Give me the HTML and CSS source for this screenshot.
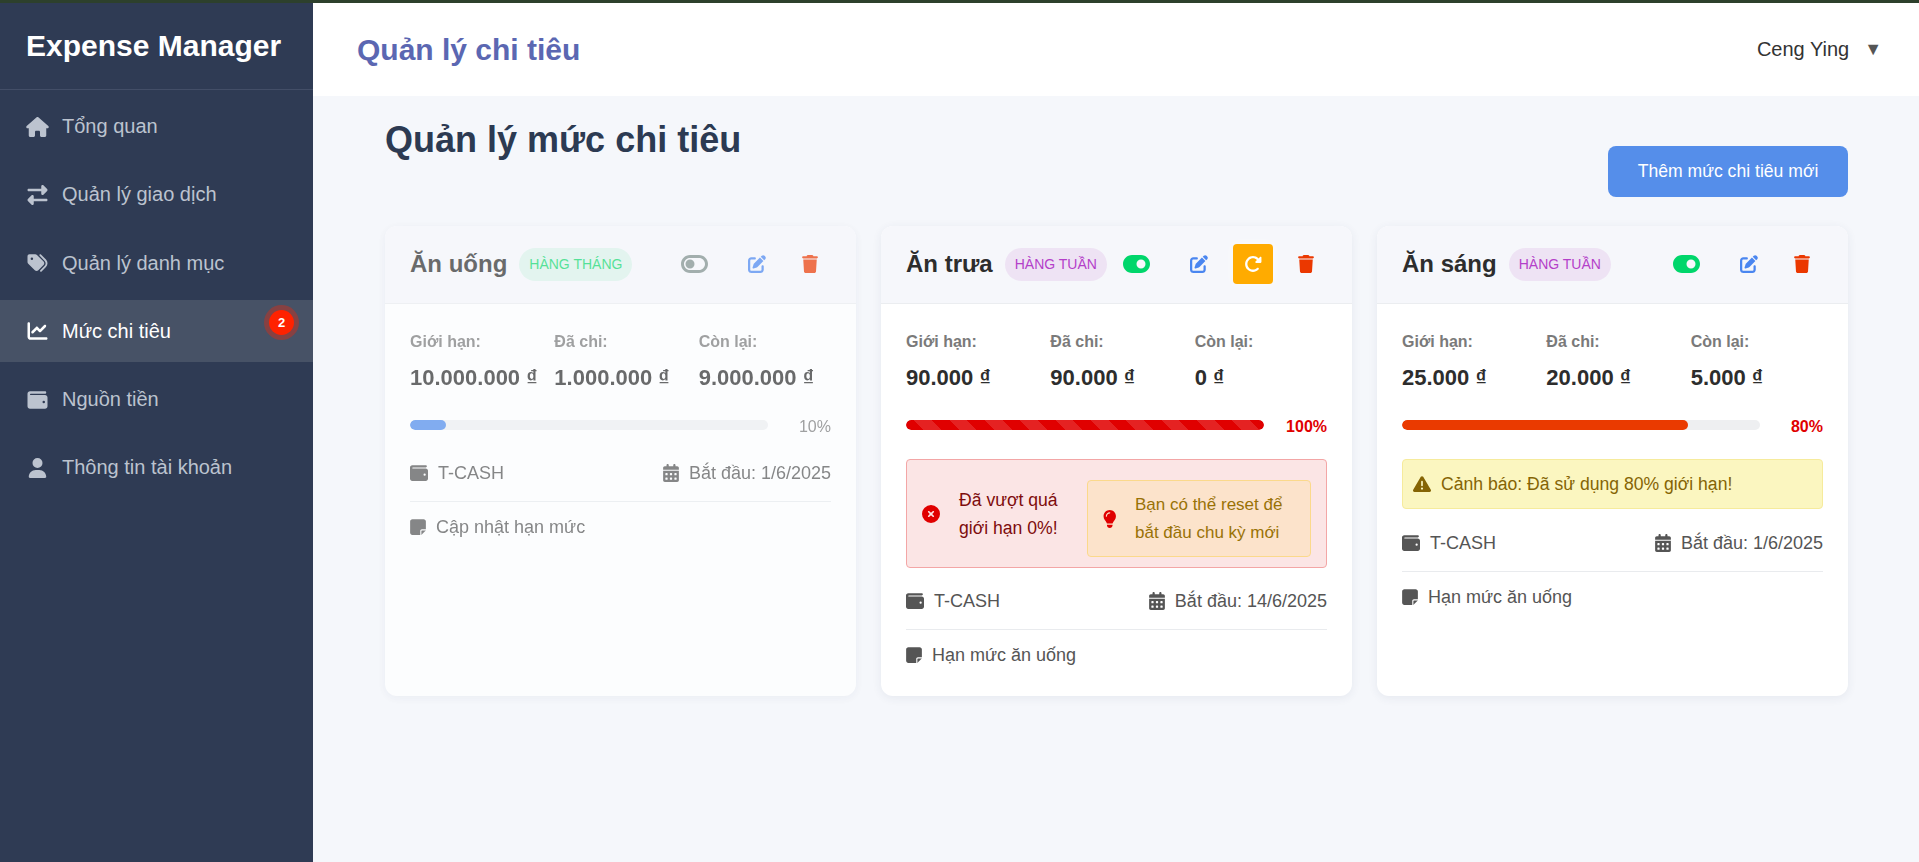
FILE: index.html
```html
<!DOCTYPE html>
<html lang="vi">
  <head>
    <meta charset="UTF-8" />
    <meta name="viewport" content="width=device-width, initial-scale=1.0" />
    <title>Expense Manager</title>
    <link rel="stylesheet" href="styles.css">
  </head>
  <body>
    <svg class="sprite" xmlns="http://www.w3.org/2000/svg">
      <symbol id="i-home" viewBox="0 0 576 512"><path d="M575.8 255.5c0 18-15 32.1-32 32.1h-32l.7 160.2c0 2.7-.2 5.4-.5 8.1V472c0 22.1-17.9 40-40 40H456c-1.1 0-2.2 0-3.3-.1c-1.4 .1-2.8 .1-4.2 .1H416 392c-22.1 0-40-17.9-40-40V448 384c0-17.7-14.3-32-32-32H256c-17.7 0-32 14.3-32 32v64 24c0 22.1-17.9 40-40 40H160 128.1c-1.5 0-3-.1-4.5-.2c-1.2 .1-2.4 .2-3.6 .2H104c-22.1 0-40-17.9-40-40V360c0-.9 0-1.9 .1-2.8V287.6H32c-18 0-32-14-32-32.1c0-9 3-17 10-24L266.4 8c7-7 15-8 22-8s15 2 21 7L564.8 231.5c8 7 12 15 11 24z"/></symbol>
      <symbol id="i-exchange" viewBox="0 0 512 512"><path d="M32 96l320 0V32c0-12.9 7.8-24.6 19.8-29.6s25.7-2.2 34.9 6.9l96 96c6 6 9.4 14.1 9.4 22.6s-3.4 16.6-9.4 22.6l-96 96c-9.2 9.2-22.9 11.9-34.9 6.9s-19.8-16.6-19.8-29.6V160L32 160c-17.7 0-32-14.3-32-32s14.3-32 32-32zM480 352c17.7 0 32 14.3 32 32s-14.3 32-32 32H160v64c0 12.9-7.8 24.6-19.8 29.6s-25.7 2.2-34.9-6.9l-96-96c-6-6-9.4-14.1-9.4-22.6s3.4-16.6 9.4-22.6l96-96c9.2-9.2 22.9-11.9 34.9-6.9s19.8 16.6 19.8 29.6l0 64H480z"/></symbol>
      <symbol id="i-tags" viewBox="0 0 512 512"><path d="M345 39.1L472.8 168.4c52.4 53 52.4 138.2 0 191.2L360.8 472.9c-9.3 9.4-24.5 9.5-33.9 .2s-9.5-24.5-.2-33.9L438.6 325.9c33.9-34.3 33.9-89.4 0-123.7L310.9 72.9c-9.3-9.4-9.2-24.6 .2-33.9s24.6-9.2 33.9 .2zM0 229.5V80C0 53.5 21.5 32 48 32H197.5c17 0 33.3 6.7 45.3 18.7l168 168c25 25 25 65.5 0 90.5L277.3 442.7c-25 25-65.5 25-90.5 0l-168-168C6.7 262.7 0 246.5 0 229.5zM144 144a32 32 0 1 0 -64 0 32 32 0 1 0 64 0z"/></symbol>
      <symbol id="i-chart" viewBox="0 0 512 512"><path d="M64 64c0-17.7-14.3-32-32-32S0 46.3 0 64V400c0 44.2 35.8 80 80 80H480c17.7 0 32-14.3 32-32s-14.3-32-32-32H80c-8.8 0-16-7.2-16-16V64zm406.6 86.6c12.5-12.5 12.5-32.8 0-45.3s-32.8-12.5-45.3 0L320 210.7l-57.4-57.4c-12.5-12.5-32.8-12.5-45.3 0l-112 112c-12.5 12.5-12.5 32.8 0 45.3s32.8 12.5 45.3 0L240 221.3l57.4 57.4c12.5 12.5 32.8 12.5 45.3 0l128-128z"/></symbol>
      <symbol id="i-wallet" viewBox="0 0 512 512"><path d="M64 32C28.7 32 0 60.7 0 96V416c0 35.3 28.7 64 64 64H448c35.3 0 64-28.7 64-64V192c0-35.3-28.7-64-64-64H80c-8.8 0-16-7.2-16-16s7.2-16 16-16H448c17.7 0 32-14.3 32-32s-14.3-32-32-32H64zM416 272a32 32 0 1 1 0 64 32 32 0 1 1 0-64z"/></symbol>
      <symbol id="i-user" viewBox="0 0 448 512"><path d="M224 256A128 128 0 1 0 224 0a128 128 0 1 0 0 256zm-45.7 48C79.8 304 0 383.8 0 482.3C0 498.7 13.3 512 29.7 512H418.3c16.4 0 29.7-13.3 29.7-29.7C448 383.8 368.2 304 269.7 304H178.3z"/></symbol>
      <symbol id="i-toggle-on" viewBox="0 0 576 512"><path d="M192 64C86 64 0 150 0 256S86 448 192 448H384c106 0 192-86 192-192s-86-192-192-192H192zm192 96a96 96 0 1 1 0 192 96 96 0 1 1 0-192z"/></symbol>
      <symbol id="i-toggle-off" viewBox="0 0 576 512"><path d="M384 128c70.7 0 128 57.3 128 128s-57.3 128-128 128H192c-70.7 0-128-57.3-128-128s57.3-128 128-128H384zM576 256c0-106-86-192-192-192H192C86 64 0 150 0 256S86 448 192 448H384c106 0 192-86 192-192zM192 352a96 96 0 1 0 0-192 96 96 0 1 0 0 192z"/></symbol>
      <symbol id="i-edit" viewBox="0 0 512 512"><path d="M471.6 21.7c-21.9-21.9-57.3-21.9-79.2 0L362.3 51.7l97.9 97.9 30.1-30.1c21.9-21.9 21.9-57.3 0-79.2L471.6 21.7zm-299.2 220c-6.1 6.1-10.8 13.6-13.5 21.9l-29.6 88.8c-2.9 8.6-.6 18.1 5.8 24.6s15.9 8.7 24.6 5.8l88.8-29.6c8.2-2.7 15.7-7.4 21.9-13.5L437.7 172.3 339.7 74.3 172.4 241.7zM96 64C43 64 0 107 0 160V416c0 53 43 96 96 96H352c53 0 96-43 96-96V320c0-17.7-14.3-32-32-32s-32 14.3-32 32v96c0 17.7-14.3 32-32 32H96c-17.7 0-32-14.3-32-32V160c0-17.7 14.3-32 32-32h96c17.7 0 32-14.3 32-32s-14.3-32-32-32H96z"/></symbol>
      <symbol id="i-trash" viewBox="0 0 448 512"><path d="M135.2 17.7L128 32H32C14.3 32 0 46.3 0 64S14.3 96 32 96H416c17.7 0 32-14.3 32-32s-14.3-32-32-32H320l-7.2-14.3C307.4 6.8 296.3 0 284.2 0H163.8c-12.1 0-23.2 6.8-28.6 17.7zM416 128H32L53.2 467c1.6 25.3 22.6 45 47.9 45H346.9c25.3 0 46.3-19.7 47.9-45L416 128z"/></symbol>
      <symbol id="i-redo" viewBox="0 0 512 512"><path d="M463.5 224H472c13.3 0 24-10.7 24-24V72c0-9.7-5.8-18.5-14.8-22.2s-19.3-1.7-26.2 5.2L413.4 96.6c-87.6-86.5-228.7-86.2-315.8 1c-87.5 87.5-87.5 229.3 0 316.8s229.3 87.5 316.8 0c12.5-12.5 12.5-32.8 0-45.3s-32.8-12.5-45.3 0c-62.5 62.5-163.8 62.5-226.3 0s-62.5-163.8 0-226.3c62.2-62.2 162.7-62.5 225.3-1L327 183c-6.9 6.9-8.9 17.2-5.2 26.2s12.5 14.8 22.2 14.8H463.5z"/></symbol>
      <symbol id="i-calendar" viewBox="0 0 448 512"><path d="M128 0c17.7 0 32 14.3 32 32V64H288V32c0-17.7 14.3-32 32-32s32 14.3 32 32V64h48c26.5 0 48 21.5 48 48v48H0V112C0 85.5 21.5 64 48 64H96V32c0-17.7 14.3-32 32-32zM0 192H448V464c0 26.5-21.5 48-48 48H48c-26.5 0-48-21.5-48-48V192zm64 80v32c0 8.8 7.2 16 16 16h32c8.8 0 16-7.2 16-16V272c0-8.8-7.2-16-16-16H80c-8.8 0-16 7.2-16 16zm128 0v32c0 8.8 7.2 16 16 16h32c8.8 0 16-7.2 16-16V272c0-8.8-7.2-16-16-16H208c-8.8 0-16 7.2-16 16zm144-16c-8.8 0-16 7.2-16 16v32c0 8.8 7.2 16 16 16h32c8.8 0 16-7.2 16-16V272c0-8.8-7.2-16-16-16H336zM64 400v32c0 8.8 7.2 16 16 16h32c8.8 0 16-7.2 16-16V400c0-8.8-7.2-16-16-16H80c-8.8 0-16 7.2-16 16zm144-16c-8.8 0-16 7.2-16 16v32c0 8.8 7.2 16 16 16h32c8.8 0 16-7.2 16-16V400c0-8.8-7.2-16-16-16H208zm112 16v32c0 8.8 7.2 16 16 16h32c8.8 0 16-7.2 16-16V400c0-8.8-7.2-16-16-16H336c-8.8 0-16 7.2-16 16z"/></symbol>
      <symbol id="i-note" viewBox="0 0 448 512"><path d="M64 32C28.7 32 0 60.7 0 96V416c0 35.3 28.7 64 64 64H288V368c0-26.5 21.5-48 48-48H448V96c0-35.3-28.7-64-64-64H64zM448 352H402.7 336c-8.8 0-16 7.2-16 16v66.7V480l32-32 64-64 32-32z"/></symbol>
      <symbol id="i-error" viewBox="0 0 512 512"><path d="M256 512A256 256 0 1 0 256 0a256 256 0 1 0 0 512zM175 175c9.4-9.4 24.6-9.4 33.9 0l47 47 47-47c9.4-9.4 24.6-9.4 33.9 0s9.4 24.6 0 33.9l-47 47 47 47c9.4 9.4 9.4 24.6 0 33.9s-24.6 9.4-33.9 0l-47-47-47 47c-9.4 9.4-24.6 9.4-33.9 0s-9.4-24.6 0-33.9l47-47-47-47c-9.4-9.4-9.4-24.6 0-33.9z"/></symbol>
      <symbol id="i-bulb" viewBox="0 0 384 512"><path d="M272 384c9.6-31.9 29.5-59.1 49.2-86.2l0 0c5.2-7.1 10.4-14.2 15.4-21.4c19.8-28.5 31.4-63 31.4-100.3C368 78.8 289.2 0 192 0S16 78.8 16 176c0 37.3 11.6 71.9 31.4 100.3c5 7.2 10.2 14.3 15.4 21.4l0 0c19.8 27.1 39.7 54.4 49.2 86.2H272zM192 512c44.2 0 80-35.8 80-80V416H112v16c0 44.2 35.8 80 80 80zM112 176c0 8.8-7.2 16-16 16s-16-7.2-16-16c0-61.9 50.1-112 112-112c8.8 0 16 7.2 16 16s-7.2 16-16 16c-44.2 0-80 35.8-80 80z"/></symbol>
      <symbol id="i-warning" viewBox="0 0 512 512"><path d="M256 32c14.2 0 27.3 7.5 34.5 19.8l216 368c7.3 12.4 7.3 27.7 .2 40.1S486.3 480 472 480H40c-14.3 0-27.6-7.7-34.7-20.1s-7-27.8 .2-40.1l216-368C228.7 39.5 241.8 32 256 32zm0 128c-13.3 0-24 10.7-24 24V296c0 13.3 10.7 24 24 24s24-10.7 24-24V184c0-13.3-10.7-24-24-24zm32 224a32 32 0 1 0 -64 0 32 32 0 1 0 64 0z"/></symbol>
    </svg>

    <div class="top-line"></div>
    <div class="layout">
      <aside class="sidebar">
        <div class="logo">Expense Manager</div>
        <nav class="nav">
          <a class="nav-item"><svg class="nav-icon"><use href="#i-home"/></svg>Tổng quan</a>
          <a class="nav-item"><svg class="nav-icon"><use href="#i-exchange"/></svg>Quản lý giao dịch</a>
          <a class="nav-item"><svg class="nav-icon"><use href="#i-tags"/></svg>Quản lý danh mục</a>
          <a class="nav-item active"><svg class="nav-icon"><use href="#i-chart"/></svg>Mức chi tiêu<span class="nav-badge">2</span></a>
          <a class="nav-item"><svg class="nav-icon"><use href="#i-wallet"/></svg>Nguồn tiền</a>
          <a class="nav-item"><svg class="nav-icon"><use href="#i-user"/></svg>Thông tin tài khoản</a>
        </nav>
      </aside>

      <div class="main">
        <header class="topbar">
          <h2 class="topbar-title">Quản lý chi tiêu</h2>
          <div class="user-menu"><span>Ceng Ying</span><span class="user-arrow">▼</span></div>
        </header>

        <div class="page">
          <div class="page-head">
            <h1 class="page-title">Quản lý mức chi tiêu</h1>
            <button class="add-btn">Thêm mức chi tiêu mới</button>
          </div>

          <div class="cards">
            <div class="card disabled">
              <div class="card-head">
                <span class="card-title">Ăn uống</span>
                <span class="chip monthly">HÀNG THÁNG</span>
                <div class="actions">
                  <span class="act act-toggle off"><svg><use href="#i-toggle-off"/></svg></span>
                  <span class="act act-edit"><svg><use href="#i-edit"/></svg></span>
                  <span class="act act-trash"><svg><use href="#i-trash"/></svg></span>
                </div>
              </div>
              <div class="card-body">
                <div class="stats">
                  <div><div class="stat-label">Giới hạn:</div><div class="stat-value">10.000.000 ₫</div></div>
                  <div><div class="stat-label">Đã chi:</div><div class="stat-value">1.000.000 ₫</div></div>
                  <div><div class="stat-label">Còn lại:</div><div class="stat-value">9.000.000 ₫</div></div>
                </div>
                <div class="progress">
                  <div class="bar"><div class="bar-fill fill-ok" style="width: 10%"></div></div>
                  <span class="percent">10%</span>
                </div>
                <div class="meta">
                  <span class="meta-item"><svg class="meta-icon wide"><use href="#i-wallet"/></svg>T-CASH</span>
                  <span class="meta-item"><svg class="meta-icon"><use href="#i-calendar"/></svg>Bắt đầu: 1/6/2025</span>
                </div>
                <div class="note"><svg class="meta-icon"><use href="#i-note"/></svg>Cập nhật hạn mức</div>
              </div>
            </div>

            <div class="card">
              <div class="card-head">
                <span class="card-title">Ăn trưa</span>
                <span class="chip weekly">HÀNG TUẦN</span>
                <div class="actions">
                  <span class="act act-toggle"><svg><use href="#i-toggle-on"/></svg></span>
                  <span class="act act-edit"><svg><use href="#i-edit"/></svg></span>
                  <span class="act act-reset"><svg><use href="#i-redo"/></svg></span>
                  <span class="act act-trash"><svg><use href="#i-trash"/></svg></span>
                </div>
              </div>
              <div class="card-body">
                <div class="stats">
                  <div><div class="stat-label">Giới hạn:</div><div class="stat-value">90.000 ₫</div></div>
                  <div><div class="stat-label">Đã chi:</div><div class="stat-value">90.000 ₫</div></div>
                  <div><div class="stat-label">Còn lại:</div><div class="stat-value">0 ₫</div></div>
                </div>
                <div class="progress">
                  <div class="bar"><div class="bar-fill fill-over" style="width: 100%"></div></div>
                  <span class="percent danger">100%</span>
                </div>
                <div class="alert alert-danger">
                  <svg class="alert-icon"><use href="#i-error"/></svg>
                  <span class="alert-text">Đã vượt quá giới hạn 0%!</span>
                  <div class="hint">
                    <svg class="hint-icon"><use href="#i-bulb"/></svg>
                    <span>Bạn có thể reset để bắt đầu chu kỳ mới</span>
                  </div>
                </div>
                <div class="meta">
                  <span class="meta-item"><svg class="meta-icon wide"><use href="#i-wallet"/></svg>T-CASH</span>
                  <span class="meta-item"><svg class="meta-icon"><use href="#i-calendar"/></svg>Bắt đầu: 14/6/2025</span>
                </div>
                <div class="note"><svg class="meta-icon"><use href="#i-note"/></svg>Hạn mức ăn uống</div>
              </div>
            </div>

            <div class="card">
              <div class="card-head">
                <span class="card-title">Ăn sáng</span>
                <span class="chip weekly">HÀNG TUẦN</span>
                <div class="actions">
                  <span class="act act-toggle"><svg><use href="#i-toggle-on"/></svg></span>
                  <span class="act act-edit"><svg><use href="#i-edit"/></svg></span>
                  <span class="act act-trash"><svg><use href="#i-trash"/></svg></span>
                </div>
              </div>
              <div class="card-body">
                <div class="stats">
                  <div><div class="stat-label">Giới hạn:</div><div class="stat-value">25.000 ₫</div></div>
                  <div><div class="stat-label">Đã chi:</div><div class="stat-value">20.000 ₫</div></div>
                  <div><div class="stat-label">Còn lại:</div><div class="stat-value">5.000 ₫</div></div>
                </div>
                <div class="progress">
                  <div class="bar"><div class="bar-fill fill-warn" style="width: 80%"></div></div>
                  <span class="percent danger">80%</span>
                </div>
                <div class="alert alert-warning">
                  <svg class="warn-icon"><use href="#i-warning"/></svg>
                  <span>Cảnh báo: Đã sử dụng 80% giới hạn!</span>
                </div>
                <div class="meta">
                  <span class="meta-item"><svg class="meta-icon wide"><use href="#i-wallet"/></svg>T-CASH</span>
                  <span class="meta-item"><svg class="meta-icon"><use href="#i-calendar"/></svg>Bắt đầu: 1/6/2025</span>
                </div>
                <div class="note"><svg class="meta-icon"><use href="#i-note"/></svg>Hạn mức ăn uống</div>
              </div>
            </div>
          </div>
        </div>
      </div>
    </div>
  </body>
</html>
```

FILE: styles.css
```css
* {
  box-sizing: border-box;
}

body {
  margin: 0;
  font-family: "Liberation Sans", Arial, sans-serif;
  background-color: #f5f7fb;
  color: #2d2d2d;
  overflow: hidden;
}

svg {
  fill: currentColor;
  display: block;
  flex-shrink: 0;
}

.sprite {
  display: none;
}

.top-line {
  height: 3px;
  background-color: #2d402c;
}

.layout {
  display: flex;
  height: 859px;
}

/* sidebar */
.sidebar {
  width: 313px;
  flex-shrink: 0;
  background-color: #2f3b54;
}

.logo {
  height: 87px;
  padding: 26px 0 0 26px;
  font-size: 30px;
  line-height: 34px;
  font-weight: 700;
  color: #fff;
  border-bottom: 1px solid #434e67;
}

.nav {
  display: flex;
  flex-direction: column;
  gap: 6.3px;
  padding-top: 5.5px;
}

.nav-item {
  position: relative;
  display: flex;
  align-items: center;
  height: 62px;
  padding-left: 26px;
  font-size: 20px;
  color: #bcc3cf;
}

.nav-item.active {
  background-color: #475266;
  color: #fff;
}

.nav-icon {
  width: 23px;
  height: 20px;
  margin-right: 13px;
}

.nav-badge {
  position: absolute;
  top: 10px;
  right: 19px;
  width: 25px;
  height: 25px;
  border-radius: 50%;
  background-color: #ff2200;
  box-shadow: 0 0 0 5px rgba(255, 34, 0, 0.35);
  color: #fff;
  font-size: 13px;
  font-weight: 700;
  line-height: 25px;
  text-align: center;
}

/* top bar */
.main {
  flex: 1;
  min-width: 0;
}

.topbar {
  display: flex;
  justify-content: space-between;
  align-items: center;
  height: 93px;
  padding: 0 37px 0 44px;
  background-color: #fff;
}

.topbar-title {
  margin: 0;
  font-size: 30px;
  font-weight: 700;
  color: #5b67b2;
}

.user-menu {
  display: flex;
  align-items: center;
  gap: 15px;
  font-size: 20px;
  color: #333;
}

.user-arrow {
  font-size: 18px;
  color: #555;
}

/* page */
.page {
  padding: 23px 71px 0 72px;
}

.page-head {
  display: flex;
  justify-content: space-between;
  margin-bottom: 29px;
}

.page-title {
  margin: 0;
  font-size: 36px;
  line-height: 42px;
  font-weight: 700;
  color: #2c3a52;
}

.add-btn {
  width: 240px;
  height: 51px;
  margin-top: 27px;
  padding: 0;
  border: none;
  border-radius: 8px;
  background-color: #558eea;
  color: #fff;
  font-family: inherit;
  font-size: 17.6px;
  cursor: pointer;
}

.cards {
  display: grid;
  grid-template-columns: repeat(3, 1fr);
  gap: 25px;
}

.card {
  border-radius: 12px;
  background-color: #fff;
  box-shadow: 0 2px 10px rgba(50, 60, 100, 0.08);
  overflow: hidden;
}

.card.disabled {
  opacity: 0.7;
}

.card-head {
  display: flex;
  align-items: center;
  height: 78px;
  padding: 0 26px 1px 25px;
  background-color: #f6f7fb;
  border-bottom: 1px solid #ebedf0;
}

.card-title {
  font-size: 24px;
  font-weight: 700;
  color: #2d2d2d;
}

.chip {
  margin-left: 12px;
  height: 33px;
  padding: 0 10px;
  border-radius: 17px;
  font-size: 14px;
  line-height: 33px;
}

.chip.monthly {
  background-color: #dbf3ea;
  color: #0fd76d;
}

.chip.weekly {
  background-color: #eee3f4;
  color: #b43fc9;
}

.actions {
  display: flex;
  align-items: center;
  gap: 13.5px;
  margin-left: auto;
}

.act {
  display: flex;
  align-items: center;
  justify-content: center;
  width: 40px;
  height: 40px;
  border-radius: 4px;
}

.act svg {
  width: 18px;
  height: 18px;
}

.act-toggle {
  width: 58px;
  color: #00d66b;
}

.act-toggle.off {
  color: #7f8f8c;
}

.act-toggle svg {
  width: 27px;
  height: 24px;
}

.act-edit {
  color: #4a86f0;
}

.act-trash {
  color: #eb3800;
}

.act-reset {
  background-color: #ffab00;
  color: #fff;
  box-shadow: 0 0 12px rgba(255, 255, 255, 0.6);
}

.card-body {
  padding: 25px 25px 31px;
}

.stats {
  display: grid;
  grid-template-columns: repeat(3, 1fr);
  gap: 12px;
}

.stat-label {
  font-size: 16px;
  line-height: 26px;
  font-weight: 700;
  color: #7a7a7a;
}

.stat-value {
  margin-top: 7px;
  font-size: 22px;
  line-height: 32px;
  font-weight: 700;
  white-space: nowrap;
  color: #2d2d2d;
}

.progress {
  display: flex;
  align-items: flex-start;
  justify-content: space-between;
  margin: 26px 0 25px;
}

.bar {
  width: 358px;
  height: 10px;
  border-radius: 5px;
  background-color: #eeeff1;
  overflow: hidden;
}

.bar-fill {
  height: 100%;
  border-radius: 5px;
}

.fill-ok {
  background-color: #4f8ceb;
}

.fill-warn {
  background-color: #ea3a00;
}

.fill-over {
  background-color: #e00000;
  background-image: repeating-linear-gradient(45deg, #e00000 0, #e00000 12.5px, #e52222 12.5px, #e52222 25px);
}

.percent {
  font-size: 16px;
  line-height: 14px;
  color: #7a7a7a;
}

.percent.danger {
  font-weight: 700;
  color: #e00000;
}

.alert {
  display: flex;
  align-items: center;
  margin-bottom: 20px;
  border-radius: 4px;
  font-size: 17.6px;
}

.alert-danger {
  margin-bottom: 19px;
  padding: 10px 15px;
  background-color: #fbe5e5;
  border: 1px solid #f3a6a6;
  color: #7e0c0c;
  line-height: 28px;
}

.alert-icon {
  width: 18px;
  height: 18px;
  margin-right: 19px;
  color: #e00000;
}

.alert-text {
  flex: 1;
  min-width: 0;
  margin-right: 12px;
}

.hint {
  display: flex;
  align-items: center;
  gap: 18.5px;
  width: 224px;
  flex-shrink: 0;
  margin-top: 10px;
  padding: 10px 15px 9px;
  background-color: #fce3cb;
  border: 1px solid #fbd98b;
  border-radius: 4px;
  color: #997206;
  font-size: 17px;
}

.hint-icon {
  width: 13.5px;
  height: 18px;
  color: #e00000;
}

.alert-warning {
  gap: 10px;
  height: 50px;
  padding: 0 10px;
  background-color: #fbf6c0;
  border: 1px solid #f6eb9c;
  color: #856404;
}

.warn-icon {
  width: 18px;
  height: 18px;
}

.meta {
  display: flex;
  justify-content: space-between;
  padding: 4px 0 18px;
  border-bottom: 1px solid #e9ebee;
  color: #555;
}

.meta-item,
.note {
  display: flex;
  align-items: center;
  gap: 10px;
  font-size: 18px;
  line-height: 20px;
  color: #555;
}

.note {
  padding-top: 15px;
}

.meta-icon {
  width: 16px;
  height: 18px;
}

.meta-icon.wide {
  width: 18px;
}
```
